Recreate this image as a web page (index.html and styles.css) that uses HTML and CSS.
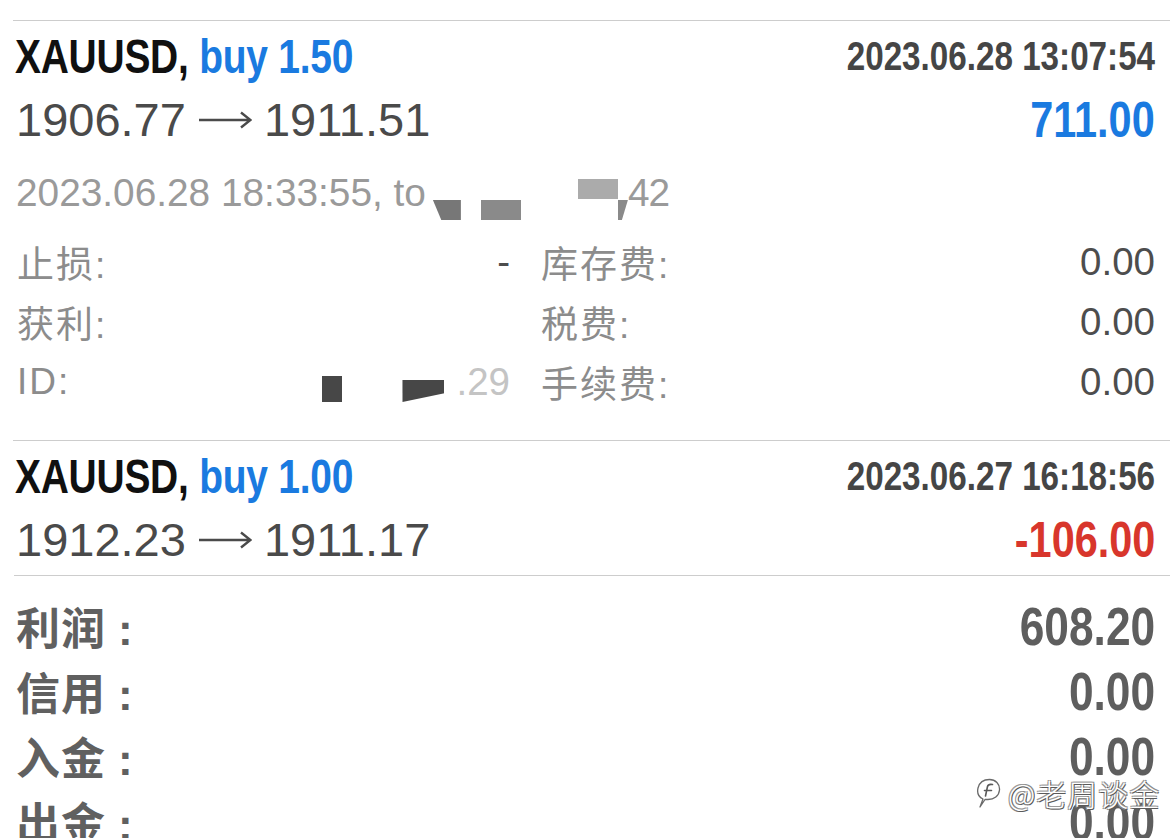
FILE: index.html
```html
<!DOCTYPE html>
<html lang="zh-CN">
<head>
<meta charset="utf-8">
<title>历史</title>
<link rel="stylesheet" href="styles.css">
</head>
<body>
<div class="screen">
  <div class="deal">
    <div class="row head">
      <span class="cond left title"><span class="sym">XAUUSD,</span> <span class="buy">buy 1.50</span></span>
      <span class="cond right time">2023.06.28 13:07:54</span>
    </div>
    <div class="row prices">
      <span class="price">1906.77<svg class="arrow" width="54" height="22" viewBox="0 0 54 22" aria-hidden="true"><path d="M1 11 H52 M43 3.5 L52.5 11 L43 18.5" fill="none" stroke="#4a4a4a" stroke-width="2.4" stroke-linejoin="miter"/></svg>1911.51</span>
      <span class="cond right profit pos">711.00</span>
    </div>
    <div class="details">
      <div class="sub">2023.06.28 18:33:55, to<span class="redact ra"></span><span class="redact rb"></span><span class="redact rc"></span><span class="redact rd"></span><span class="tail">42</span></div>
      <div class="grid">
        <div class="cell"><span class="lbl">止损:</span><span class="val">-</span></div>
        <div class="cell"><span class="lbl">库存费:</span><span class="val">0.00</span></div>
        <div class="cell"><span class="lbl">获利:</span><span class="val"></span></div>
        <div class="cell"><span class="lbl">税费:</span><span class="val">0.00</span></div>
        <div class="cell"><span class="lbl">ID:</span><span class="val"><span class="redact re"></span><span class="redact rf"></span><span class="blur">.29</span></span></div>
        <div class="cell"><span class="lbl">手续费:</span><span class="val">0.00</span></div>
      </div>
    </div>
  </div>
  <div class="deal last">
    <div class="row head">
      <span class="cond left title"><span class="sym">XAUUSD,</span> <span class="buy">buy 1.00</span></span>
      <span class="cond right time">2023.06.27 16:18:56</span>
    </div>
    <div class="row prices">
      <span class="price">1912.23<svg class="arrow" width="54" height="22" viewBox="0 0 54 22" aria-hidden="true"><path d="M1 11 H52 M43 3.5 L52.5 11 L43 18.5" fill="none" stroke="#4a4a4a" stroke-width="2.4" stroke-linejoin="miter"/></svg>1911.17</span>
      <span class="cond right profit neg">-106.00</span>
    </div>
  </div>
  <div class="summary">
    <div class="srow"><span class="slbl">利润<span class="colon">:</span></span><span class="cond right sval">608.20</span></div>
    <div class="srow"><span class="slbl">信用<span class="colon">:</span></span><span class="cond right sval">0.00</span></div>
    <div class="srow"><span class="slbl">入金<span class="colon">:</span></span><span class="cond right sval">0.00</span></div>
    <div class="srow"><span class="slbl">出金<span class="colon">:</span></span><span class="cond right sval">0.00</span></div>
  </div>
  <div class="watermark">
    <svg class="wm-icon" width="26" height="32" viewBox="0 0 26 32" aria-hidden="true">
      <path d="M4 30 L7 22 C2.5 20 1 15.5 2 11 C3.5 5 8 2.5 13.5 2.5 C19.5 2.5 24 7 23.5 13 C23 19 18 22.5 12 22.5 L9 22.5 Z" fill="#ffffff" stroke="#6a6a6a" stroke-width="1.3" stroke-linejoin="round"/>
      <path d="M9.5 19 L11.5 9.5 C12 7.5 13.5 7 16.5 7.5 M8.5 13.5 L15.5 13.5" fill="none" stroke="#5a5a5a" stroke-width="1.6" stroke-linecap="round"/>
    </svg>
    <span class="wm-text">@老周谈金</span>
  </div>
</div>
</body>
</html>
```

FILE: styles.css
```css
html, body {
  margin: 0;
  padding: 0;
  background: #ffffff;
}

body {
  font-family: "Liberation Sans", "Noto Sans CJK SC", sans-serif;
  color: #4a4a4a;
  width: 1170px;
  height: 838px;
  overflow: hidden;
}

.screen {
  position: relative;
  padding-top: 20px;
  height: 818px;
  overflow: hidden;
}

.deal {
  margin-left: 13px;
  border-top: 1px solid #cdcdcd;
  padding: 7px 15px 28px 2px;
}

.deal.last {
  padding-bottom: 1px;
}

.row {
  display: flex;
  justify-content: space-between;
  align-items: center;
}

.head {
  height: 56px;
}

.prices {
  height: 70px;
}

.cond {
  display: inline-block;
  font-weight: 700;
  white-space: nowrap;
  transform: scaleX(0.82);
}

.cond.left {
  transform-origin: left center;
}

.cond.right {
  transform-origin: right center;
}

.title {
  font-size: 47.5px;
  letter-spacing: -0.3px;
}

.sym {
  color: #101010;
}

.buy {
  color: #1a7ae0;
}

.time {
  font-size: 40.5px;
  color: #454545;
}

.price {
  font-size: 47px;
  color: #4a4a4a;
  padding-left: 1px;
  display: flex;
  align-items: center;
}

.arrow {
  margin: 2px 12px 0 12px;
}

.profit {
  font-size: 50.5px;
}

.pos {
  color: #1a7ae0;
}

.neg {
  color: #d8362c;
}

.details {
  margin-top: 9px;
}

.sub {
  height: 60px;
  line-height: 60px;
  font-size: 38.8px;
  color: #9a9a9a;
  padding-left: 1px;
}

.tail {
  letter-spacing: -1px;
}

.redact {
  display: inline-block;
  height: 20px;
}

.ra {
  width: 28px;
  margin-left: 7px;
  background: #777777;
  vertical-align: -14px;
  clip-path: polygon(0 0, 100% 0, 100% 100%, 30% 100%);
}

.rb {
  width: 40px;
  margin-left: 20px;
  background: #8a8a8a;
  vertical-align: -14px;
}

.rc {
  width: 40px;
  margin-left: 57px;
  background: #ababab;
  vertical-align: 7px;
}

.rd {
  width: 10px;
  background: #8a8a8a;
  vertical-align: -14px;
  clip-path: polygon(0 0, 100% 0, 40% 100%, 0 100%);
}

.grid {
  margin-top: 9px;
  display: grid;
  grid-template-columns: 495px 1fr;
  column-gap: 29px;
}

.cell {
  height: 60px;
  display: flex;
  justify-content: space-between;
  align-items: center;
}

.lbl {
  font-size: 37px;
  color: #8c8c8c;
  padding-left: 2px;
  letter-spacing: 2px;
}

.val {
  font-size: 38.5px;
  color: #4d4d4d;
  display: flex;
  align-items: center;
}

.re {
  width: 20px;
  height: 26px;
  background: #474747;
  margin-right: 60px;
  margin-top: 14px;
}

.rf {
  width: 42px;
  height: 22px;
  background: #474747;
  margin-top: 18px;
  margin-right: 12px;
  clip-path: polygon(0 0, 100% 0, 100% 60%, 0 100%);
}

.blur {
  color: #c4c4c4;
}

.summary {
  margin-left: 14px;
  border-top: 1px solid #cdcdcd;
  padding: 17px 15px 0 2px;
}

.srow {
  height: 65px;
  display: flex;
  justify-content: space-between;
  align-items: center;
}

.slbl {
  font-size: 44px;
  font-weight: 700;
  color: #606060;
  letter-spacing: 1px;
}

.colon {
  margin-left: 12px;
}

.sval {
  font-size: 54px;
  color: #5e5e5e;
}

.watermark {
  position: absolute;
  left: 976px;
  top: 771px;
  display: flex;
  align-items: center;
  gap: 6px;
}

.wm-text {
  font-family: "Noto Sans CJK SC", sans-serif;
  font-size: 30px;
  font-weight: 300;
  color: #ffffff;
  letter-spacing: 1px;
  text-shadow: 1px 1px 0 #5a5a5a, -1px -1px 0 #9a9a9a, 1px -1px 0 #8a8a8a, -1px 1px 0 #8a8a8a;
}
```
